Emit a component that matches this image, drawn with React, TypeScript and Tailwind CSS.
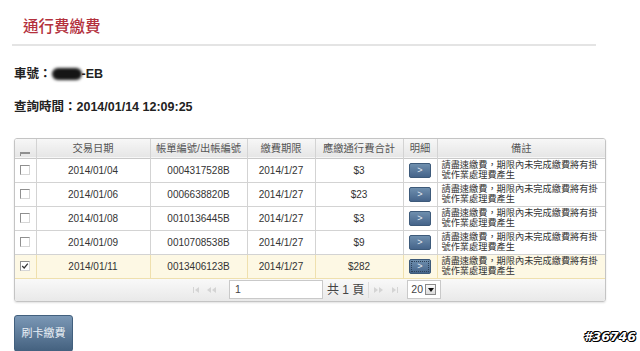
import React from "react";

const rows = [
  { date: "2014/01/04", bill: "0004317528B", due: "2014/1/27", amt: "$3", checked: false },
  { date: "2014/01/06", bill: "0006638820B", due: "2014/1/27", amt: "$23", checked: false },
  { date: "2014/01/08", bill: "0010136445B", due: "2014/1/27", amt: "$3", checked: false },
  { date: "2014/01/09", bill: "0010708538B", due: "2014/1/27", amt: "$9", checked: false },
  { date: "2014/01/11", bill: "0013406123B", due: "2014/1/27", amt: "$282", checked: true },
];

const CJK = "font-['Liberation_Sans','Noto_Sans_CJK_TC',sans-serif]";

function Checkbox({ checked }: { checked: boolean }) {
  return (
    <div className="mx-auto w-[10px] h-[10px] border border-[#8f8f8f] border-r-[#d6d6d6] border-b-[#d6d6d6] bg-white flex items-center justify-center">
      {checked && (
        <svg width="8" height="8" viewBox="0 0 8 8">
          <path d="M1.2 4 L3.2 6 L6.8 1.6" stroke="#333" strokeWidth="1.2" fill="none" />
        </svg>
      )}
    </div>
  );
}

function DetailBtn({ focused }: { focused: boolean }) {
  return (
    <div className="mx-auto w-[22px] h-[15px] rounded-[2px] bg-gradient-to-b from-[#6f8fae] to-[#45648a] border border-[#3d5a7a] flex items-center justify-center relative">
      {focused && <div className="absolute inset-[1px] border border-dotted border-[#2c4057]" />}
      <span className="text-[9px] leading-none text-[#e8eef5]">&gt;</span>
    </div>
  );
}

export default function App() {
  const th = "border-r border-[#d3d3d3] text-[10.3px] font-normal text-[#555] text-center align-middle";
  return (
    <div className={`w-[640px] h-[351px] bg-white relative overflow-hidden ${CJK} text-[#222]`}>
      <div className="pt-[17px] pl-[23px] text-[15.5px] leading-[20px] text-[#b3303c] font-medium">通行費繳費</div>
      <div className="mt-[7px] ml-[12px] w-[584px] h-[2px] bg-[#e4e4e4]" />
      <div className="mt-[20px] ml-[14px] h-[16px] flex items-center text-[12.5px] font-bold text-[#222]">
        <span>車號：</span>
        <span className="inline-block w-[30px] h-[12px] rounded-[6px] bg-[#151515] blur-[1.5px]" />
        <span>-EB</span>
      </div>
      <div className="mt-[17px] ml-[14px] h-[16px] flex items-center text-[12.5px] font-bold text-[#222]">
        查詢時間：2014/01/14 12:09:25
      </div>

      <div className="mt-[23px] ml-[14px] w-[592px] border border-[#c4c4c4] rounded-[3px] overflow-hidden shadow-[0_1px_2px_rgba(0,0,0,0.12)]">
        <table className="w-full border-collapse table-fixed">
          <colgroup>
            <col className="w-[21px]" />
            <col className="w-[114px]" />
            <col className="w-[97px]" />
            <col className="w-[68px]" />
            <col className="w-[88px]" />
            <col className="w-[34px]" />
            <col />
          </colgroup>
          <thead>
            <tr className="h-[19px] bg-gradient-to-b from-[#f7f7f7] to-[#e6e6e6] border-b border-[#c9c9c9]">
              <th className={th}>
                <div className="mx-auto mt-[11px] w-[10px] h-[4px] border-t-2 border-l border-[#8f8f8f]" />
              </th>
              <th className={th}>交易日期</th>
              <th className={th}>帳單編號/出帳編號</th>
              <th className={th}>繳費期限</th>
              <th className={th}>應繳通行費合計</th>
              <th className={th}>明細</th>
              <th className={`${th} border-r-0`}>備註</th>
            </tr>
          </thead>
          <tbody>
            {rows.map((r, i) => {
              const bd = r.checked ? "border-[#efe0ae]" : "border-[#d3d3d3]";
              const td = `border-r border-b ${bd} text-[10px] text-[#333] text-center align-middle`;
              return (
                <tr key={i} className={`h-[24px] ${r.checked ? "bg-[#fdf8e4]" : "bg-white"}`}>
                  <td className={td}>
                    <Checkbox checked={r.checked} />
                  </td>
                  <td className={td}>{r.date}</td>
                  <td className={td}>{r.bill}</td>
                  <td className={td}>{r.due}</td>
                  <td className={td}>{r.amt}</td>
                  <td className={td}>
                    <DetailBtn focused={r.checked} />
                  </td>
                  <td className={`border-b ${bd} px-[4px] text-left align-middle text-[9.2px] leading-[10px] text-[#333]`}>
                    請盡速繳費，期限內未完成繳費將有掛號作業處理費產生
                  </td>
                </tr>
              );
            })}
          </tbody>
        </table>
        <div className="h-[22px] bg-gradient-to-b from-[#f9f9f9] to-[#e9e9e9] flex items-center text-[#444]">
          <div className="w-[178px]" />
          <svg width="26" height="8" viewBox="0 0 26 8" className="mr-[10px]">
            <g fill="#d4d4d4">
              <rect x="0" y="1" width="1" height="6" />
              <path d="M2 4 L6 1 L6 7 Z" />
              <path d="M14 4 L18 1 L18 7 Z" />
              <path d="M19 4 L23 1 L23 7 Z" />
            </g>
          </svg>
          <div className="w-[94px] h-[19px] bg-white border border-[#c9c9c9] text-[10.5px] leading-[17px] pl-[5px]">1</div>
          <div className="ml-[4px] text-[12px]">共 1 頁</div>
          <div className="ml-[4px] w-[1px] h-[16px] bg-[#dcdcdc]" />
          <svg width="26" height="8" viewBox="0 0 26 8" className="ml-[5px]">
            <g fill="#d4d4d4">
              <path d="M0 1 L4 4 L0 7 Z" />
              <path d="M5 1 L9 4 L5 7 Z" />
              <path d="M18 1 L22 4 L18 7 Z" />
              <rect x="23" y="1" width="1" height="6" />
            </g>
          </svg>
          <div className="ml-[7px] w-[34px] h-[19px] bg-white border border-[#c9c9c9] flex items-center pl-[3px] text-[10.5px]">
            <span>20</span>
            <div className="ml-[2px] w-[11px] h-[11px] border border-[#8a8a8a] bg-gradient-to-b from-[#fafafa] to-[#dcdcdc] flex items-center justify-center">
              <svg width="6" height="4" viewBox="0 0 6 4">
                <path d="M0 0 L6 0 L3 4 Z" fill="#111" />
              </svg>
            </div>
          </div>
        </div>
      </div>

      <div className="mt-[13px] ml-[14px] w-[59px] h-[37px] rounded-[3px] border border-[#42607e] bg-gradient-to-b from-[#7b98b6] to-[#44617f] flex items-center justify-center text-[11px] text-[#e9eff5]">
        刷卡繳費
      </div>

      <div className="absolute right-[4px] bottom-[4px] text-[12.5px] font-bold italic text-white font-['DejaVu_Sans',sans-serif] [text-shadow:-1px_0_#000,1px_0_#000,0_-1px_#000,0_1px_#000,1px_1px_#000,-1px_-1px_#000]">
        #36746
      </div>
    </div>
  );
}
